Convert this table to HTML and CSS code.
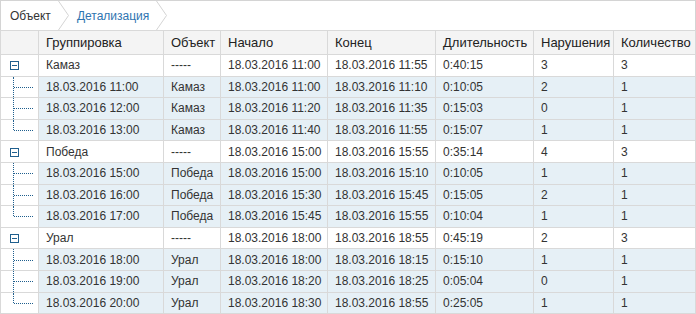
FILE: index.html
```html
<!DOCTYPE html>
<html>
<head>
<meta charset="utf-8">
<link rel="stylesheet" href="styles.css">
</head>
<body>
<div class="panel">
  <div class="crumbs">
    <span class="crumb">Объект</span>
    <span class="sep"><svg width="11" height="29" viewBox="0 0 11 29"><polyline points="0.5,0 10.5,14.5 0.5,29" fill="none" stroke="#d4d4d4" stroke-width="1"/></svg></span>
    <span class="crumb active">Детализация</span>
    <span class="sep"><svg width="11" height="29" viewBox="0 0 11 29"><polyline points="0.5,0 10.5,14.5 0.5,29" fill="none" stroke="#d4d4d4" stroke-width="1"/></svg></span>
  </div>
  <table class="grid">
    <colgroup>
      <col style="width:38px"><col style="width:125px"><col style="width:57px"><col style="width:107px"><col style="width:108px"><col style="width:98px"><col style="width:80px"><col style="width:82px">
    </colgroup>
    <thead>
      <tr><th></th><th>Группировка</th><th>Объект</th><th>Начало</th><th>Конец</th><th>Длительность</th><th>Нарушения</th><th>Количество</th></tr>
    </thead>
    <tbody>
      <tr class="group"><td class="tree"><span class="toggle"></span></td><td>Камаз</td><td>-----</td><td>18.03.2016 11:00</td><td>18.03.2016 11:55</td><td>0:40:15</td><td>3</td><td>3</td></tr>
      <tr class="child"><td class="tree"><span class="line mid"></span></td><td>18.03.2016 11:00</td><td>Камаз</td><td>18.03.2016 11:00</td><td>18.03.2016 11:10</td><td>0:10:05</td><td>2</td><td>1</td></tr>
      <tr class="child"><td class="tree"><span class="line mid"></span></td><td>18.03.2016 12:00</td><td>Камаз</td><td>18.03.2016 11:20</td><td>18.03.2016 11:35</td><td>0:15:03</td><td>0</td><td>1</td></tr>
      <tr class="child"><td class="tree"><span class="line last"></span></td><td>18.03.2016 13:00</td><td>Камаз</td><td>18.03.2016 11:40</td><td>18.03.2016 11:55</td><td>0:15:07</td><td>1</td><td>1</td></tr>
      <tr class="group"><td class="tree"><span class="toggle"></span></td><td>Победа</td><td>-----</td><td>18.03.2016 15:00</td><td>18.03.2016 15:55</td><td>0:35:14</td><td>4</td><td>3</td></tr>
      <tr class="child"><td class="tree"><span class="line mid"></span></td><td>18.03.2016 15:00</td><td>Победа</td><td>18.03.2016 15:00</td><td>18.03.2016 15:10</td><td>0:10:05</td><td>1</td><td>1</td></tr>
      <tr class="child"><td class="tree"><span class="line mid"></span></td><td>18.03.2016 16:00</td><td>Победа</td><td>18.03.2016 15:30</td><td>18.03.2016 15:45</td><td>0:15:05</td><td>2</td><td>1</td></tr>
      <tr class="child"><td class="tree"><span class="line last"></span></td><td>18.03.2016 17:00</td><td>Победа</td><td>18.03.2016 15:45</td><td>18.03.2016 15:55</td><td>0:10:04</td><td>1</td><td>1</td></tr>
      <tr class="group"><td class="tree"><span class="toggle"></span></td><td>Урал</td><td>-----</td><td>18.03.2016 18:00</td><td>18.03.2016 18:55</td><td>0:45:19</td><td>2</td><td>3</td></tr>
      <tr class="child"><td class="tree"><span class="line mid"></span></td><td>18.03.2016 18:00</td><td>Урал</td><td>18.03.2016 18:00</td><td>18.03.2016 18:15</td><td>0:15:10</td><td>1</td><td>1</td></tr>
      <tr class="child"><td class="tree"><span class="line mid"></span></td><td>18.03.2016 19:00</td><td>Урал</td><td>18.03.2016 18:20</td><td>18.03.2016 18:25</td><td>0:05:04</td><td>0</td><td>1</td></tr>
      <tr class="child"><td class="tree"><span class="line last"></span></td><td>18.03.2016 20:00</td><td>Урал</td><td>18.03.2016 18:30</td><td>18.03.2016 18:55</td><td>0:25:05</td><td>1</td><td>1</td></tr>
    </tbody>
  </table>
</div>
</body>
</html>
```

FILE: styles.css
```css
html, body {
  margin: 0;
  padding: 0;
  background: #ffffff;
}
body {
  font-family: "Liberation Sans", Arial, sans-serif;
  font-size: 12px;
  color: #333333;
}
.panel {
  width: 696px;
}
.crumbs {
  display: flex;
  align-items: center;
  border: 1px solid #d4d4d4;
  border-bottom: none;
  box-sizing: border-box;
  height: 30px;
  padding-left: 9px;
}
.crumb {
  font-size: 12px;
  color: #333333;
}
.crumb.active {
  color: #2e74b0;
}
.sep {
  display: flex;
  height: 29px;
  margin: 0 8px 0 7px;
}
.grid {
  border-collapse: collapse;
  table-layout: fixed;
  width: 696px;
}
.grid th, .grid td {
  border: 1px solid #d9d9d9;
  padding: 0 0 0 7px;
  text-align: left;
  white-space: nowrap;
  overflow: hidden;
}
.grid th {
  font-weight: normal;
  font-size: 13px;
  background: #f4f4f4;
  color: #222222;
  height: 23px;
}
.grid td {
  height: 20.6px;
}
.grid tr.child td {
  background: #e6f0f6;
}
.grid td.tree {
  background: #ffffff !important;
  padding: 0;
  position: relative;
}
.toggle {
  display: block;
  width: 9px;
  height: 9px;
  border: 1px solid #1f5f8e;
  box-sizing: border-box;
  margin: 1px 0 0 9px;
  position: relative;
}
.toggle::after {
  content: "";
  position: absolute;
  left: 1px;
  right: 1px;
  top: 3px;
  height: 1px;
  background: #1f5f8e;
}
.line {
  position: absolute;
  left: 12px;
  top: 0;
  width: 20px;
  height: 100%;
}
.line::before {
  content: "";
  position: absolute;
  left: 0;
  top: 0;
  height: 100%;
  border-left: 1px dotted #1f5f8e;
}
.line.last::before {
  height: 50%;
}
.line::after {
  content: "";
  position: absolute;
  left: 1px;
  top: 50%;
  width: 19px;
  border-top: 1px dotted #1f5f8e;
}
```
